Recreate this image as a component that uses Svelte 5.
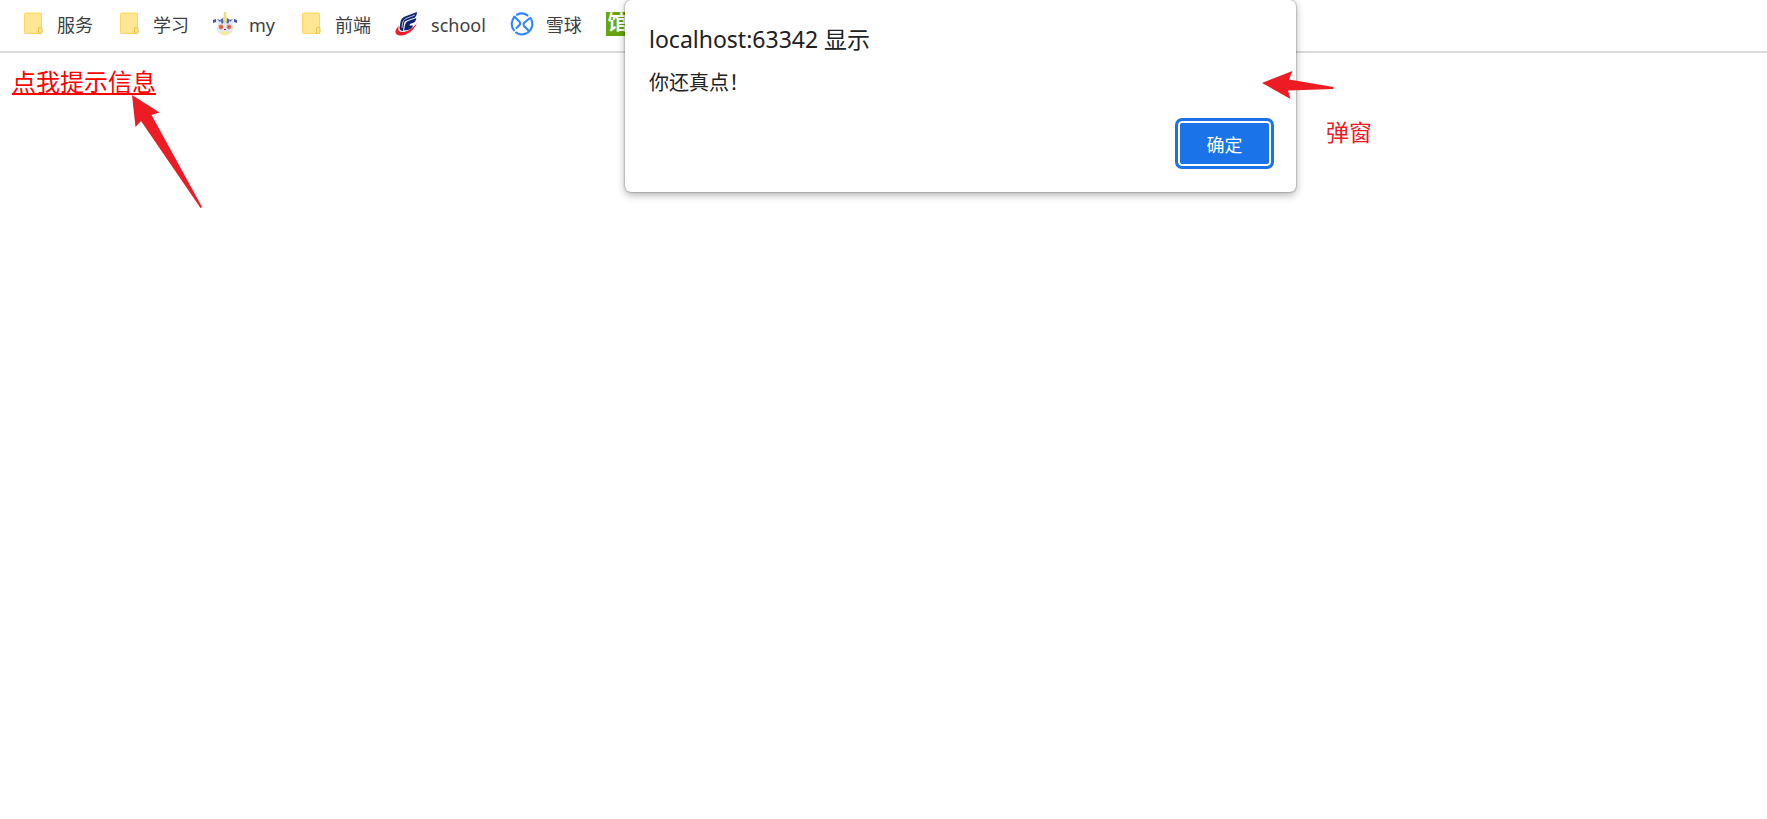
<script lang="ts">
  interface Bookmark {
    icon: string;
    title: string;
  }

  const bookmarks: Bookmark[] = [
    { icon: 'folder', title: '服务' },
    { icon: 'folder', title: '学习' },
    { icon: 'my', title: 'my' },
    { icon: 'folder', title: '前端' },
    { icon: 'school', title: 'school' },
    { icon: 'xueqiu', title: '雪球' },
    { icon: 'green', title: '' },
  ]

  let open = $state(true)

  const showMessage = (event: MouseEvent) => {
    event.preventDefault()
    open = true
  }
</script>

<nav class="bookmarks">
  {#each bookmarks as bookmark}
    <a class="bookmark" href="#{bookmark.icon}">
      {#if bookmark.icon === 'folder'}
        <svg class="icon" viewBox="0 0 24 24" aria-hidden="true">
          <rect x="3.5" y="1" width="17" height="20.5" rx="1" fill="#ffe694" stroke="#ffd65c" />
          <path d="M17.500 21.500V17a1.700 1.700 0 0 1 3.500 0V20a1.500 1.500 0 0 1-1.500 1.500z" fill="#ffe694" stroke="#edbd3c" />
        </svg>
      {:else if bookmark.icon === 'my'}
        <svg class="icon" viewBox="0 0 24 24" aria-hidden="true">
          <path d="M5 9l5-3h4l5 3 1 8q-1 6-8 6t-8-6z" fill="#dfe7f9" />
          <path d="M0 9l4-2 4 2-3 3zM24 9l-4-2-4 2 3 3z" fill="#e4ebfa" />
          <path d="M0 8l3-1v3l-3 1zM24 8l-3-1v3l3 1zM4 7l3 1v2zM20 7l-3 1v2z" fill="#4b579e" />
          <path d="M7 8l3-2 1 4-2 2zM17 8l-3-2-1 4 2 2z" fill="#5263b5" />
          <path d="M11 0h2l1 9-2 3-2-3z" fill="#eadf78" />
          <circle cx="8" cy="15" r="2.4" fill="#f2784f" />
          <circle cx="16" cy="15" r="2.4" fill="#f2784f" />
          <path d="M7.500 15h1.500M15 15h1.500M11 17.500h2" stroke="#7d2e48" />
          <path d="M7 20q5-2 10 0-2 3.500-5 3.500T7 20z" fill="#f5ec9a" />
        </svg>
      {:else if bookmark.icon === 'school'}
        <svg class="icon" viewBox="0 0 24 24" aria-hidden="true">
          <path d="M22 0L10 4.500Q6 6 5.500 10L4.500 16Q5 19 8 19L9 12Q9 9 13 8L20 5.500Q22 4 22 0z" fill="#10236f" />
          <path d="M21.500 6L13 9Q10.500 10 10 13L9 18.500 13 18Q17 17 18 13.500H14.500L15 12 19 10.500Q21 9 21.500 6z" fill="#10236f" />
          <path d="M4 14C-1 18-1 23 5 23.500 12 24 19 18 22 11 17 17 11 20.500 6 20 3 19.500 3 17 4 14z" fill="#fa1a27" />
          <path d="M20 3L11 6.500Q8 8 7.500 11L7 16" fill="none" stroke="#fff" stroke-width="0.7" />
        </svg>
      {:else if bookmark.icon === 'xueqiu'}
        <svg class="icon" viewBox="0 0 24 24" aria-hidden="true">
          <g fill="none" stroke="#2f86ff" stroke-width="2.1" stroke-linecap="round">
            <path d="M7 2.700A10.300 10.300 0 0 1 17.500 3.300M20.500 6A10.300 10.300 0 0 1 18 20.300M16.500 21.300A10.300 10.300 0 0 1 6 20.500M4 18.300A10.300 10.300 0 0 1 4.500 4.800" />
            <path d="M4.500 4.800L9.500 9.700Q11 11.500 9.500 13L6.500 16M20 6L14 11Q12.800 12.500 14 14L19 19" />
          </g>
        </svg>
      {:else}
        <span class="icon green">馆</span>
      {/if}
      {#if bookmark.title}
        <span>{bookmark.title}</span>
      {/if}
    </a>
  {/each}
</nav>

<main>
  <a class="tip" href="#tip" onclick={showMessage}>点我提示信息</a>
</main>

{#if open}
  <div class="dialog" role="alertdialog" aria-labelledby="title" aria-describedby="message">
    <h1 id="title">localhost:63342 显示</h1>
    <p id="message">你还真点！</p>
    <button class="confirm" onclick={() => (open = false)}>确定</button>
  </div>
{/if}

<svg class="arrow link-arrow" viewBox="0 0 70 113" aria-hidden="true">
  <path d="M0 0L27.500 17.500 19.500 20 70 112 68.500 113 9 26 3.500 32z" />
</svg>
<svg class="arrow dialog-arrow" viewBox="0 0 72 28" aria-hidden="true">
  <path d="M0 12L30.500 0 27 8.500 71.500 16v2L26 19.500 28.500 28z" />
</svg>
<span class="note">弹窗</span>

<style>
  :global(body) {
    background: #fff;
    font-family: "Noto Sans", "Noto Sans CJK SC", sans-serif;
  }

  .bookmarks {
    display: flex;
    gap: 24px;
    height: 51px;
    padding: 0 21px;
    border-bottom: 2px solid #dadada;
    overflow: hidden;
  }

  .bookmark {
    display: flex;
    flex: none;
    align-items: center;
    gap: 12px;
    height: 48px;
    font-size: 18px;
    line-height: 26px;
    color: #3c4043;
    text-decoration: none;
  }

  .bookmark span:not(.icon) {
    padding-top: 2px;
  }

  .icon {
    width: 24px;
    height: 24px;
    flex: none;
  }

  .green {
    background: #67a50c;
    color: #fff;
    font-size: 20px;
    font-weight: bold;
    line-height: 22px;
    text-align: center;
  }

  main {
    padding: 13px 12px;
  }

  .tip {
    display: inline-block;
    font-size: 24px;
    line-height: 32px;
    color: #f00;
    text-decoration-thickness: 2px;
    text-underline-offset: 2px;
  }

  .dialog {
    position: absolute;
    top: 0;
    left: 625px;
    display: flex;
    flex-direction: column;
    box-sizing: border-box;
    width: 671px;
    padding: 23px 22px 23px 24px;
    background: #fff;
    border-radius: 6px;
    box-shadow: 0 0 2px rgba(0, 0, 0, 0.5), 0 3px 8px rgba(0, 0, 0, 0.3);
    color: #202124;
  }

  h1 {
    margin: 0;
    font-size: 23px;
    font-weight: normal;
    line-height: 32px;
  }

  p {
    margin: 14px 0 21px;
    font-size: 20px;
    line-height: 28px;
  }

  .confirm {
    align-self: flex-end;
    width: 99px;
    height: 51px;
    padding: 0;
    border: 3px solid #1a73e8;
    border-radius: 7px;
    background: #1a73e8;
    box-shadow: inset 0 0 0 2px #fff;
    color: #fff;
    font-family: inherit;
    font-size: 18px;
  }

  .arrow {
    position: absolute;
    fill: #ed1c24;
    pointer-events: none;
  }

  .link-arrow {
    top: 95px;
    left: 132px;
    width: 70px;
    height: 113px;
  }

  .dialog-arrow {
    top: 71px;
    left: 1262px;
    width: 72px;
    height: 28px;
  }

  .note {
    position: absolute;
    top: 116px;
    left: 1326px;
    font-size: 23px;
    line-height: 32px;
    color: #ed1c24;
  }
</style>
